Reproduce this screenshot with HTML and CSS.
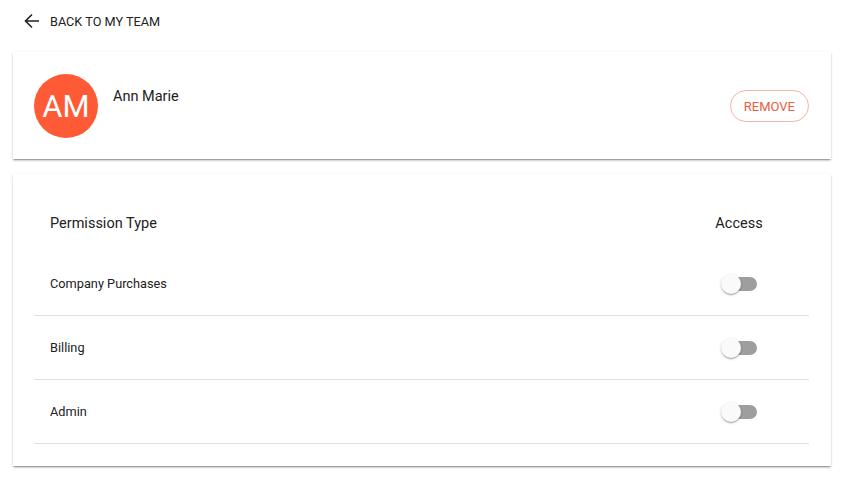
FILE: index.html
```html
<!DOCTYPE html>
<html>
<head>
<meta charset="utf-8">
<link rel="stylesheet" href="styles.css">
</head>
<body>
<div class="page">
  <a class="back">
    <svg class="back-icon" width="16" height="16" viewBox="0 0 16 16"><path d="M15 8H2M8 1.5L1.5 8 8 14.5" fill="none" stroke="#222" stroke-width="1.6"/></svg>
    <span>BACK TO MY TEAM</span>
  </a>
  <div class="card profile">
    <div class="avatar">AM</div>
    <div class="name">Ann Marie</div>
    <button class="remove">REMOVE</button>
  </div>
  <div class="card perms">
    <div class="row head">
      <div class="type">Permission Type</div>
      <div class="access">Access</div>
    </div>
    <div class="row item">
      <div class="type">Company Purchases</div>
      <div class="access"><span class="switch"><span class="track"></span><span class="thumb"></span></span></div>
    </div>
    <div class="row item">
      <div class="type">Billing</div>
      <div class="access"><span class="switch"><span class="track"></span><span class="thumb"></span></span></div>
    </div>
    <div class="row item">
      <div class="type">Admin</div>
      <div class="access"><span class="switch"><span class="track"></span><span class="thumb"></span></span></div>
    </div>
  </div>
</div>
</body>
</html>
```
FILE: styles.css
```css
* { box-sizing: border-box; }
body {
  margin: 0;
  background: #fff;
  font-family: Roboto, "Noto Sans", sans-serif;
  color: #212121;
}
.page {
  padding: 0 15px 13px 13px;
}
.back {
  display: flex;
  align-items: center;
  height: 42px;
  padding-left: 11px;
  gap: 10px;
  font-size: 12.7px;
  color: #222;
}
.back-icon { display: block; }
.card {
  background: #fff;
  box-shadow: 0 2px 2px -1px rgba(0,0,0,.3), 0 1px 1px 0 rgba(0,0,0,.14), 0 1px 3px 0 rgba(0,0,0,.12);
  margin-top: 10px;
}
.profile {
  display: flex;
  align-items: flex-start;
  height: 107px;
  padding: 22px 22px 0 21px;
}
.avatar {
  width: 64px;
  height: 64px;
  border-radius: 50%;
  background: #ff5a36;
  color: #fff;
  font-size: 31px;
  display: flex;
  align-items: center;
  justify-content: center;
}
.name {
  margin-left: 15px;
  margin-top: 14px;
  font-size: 14.5px;
  flex: 1;
}
.remove {
  margin-top: 16px;
  height: 32px;
  padding: 0 13px;
  border-radius: 16px;
  border: 1px solid #f2b6a5;
  background: #fff;
  color: #e8603c;
  font-family: inherit;
  font-size: 13px;
}
.perms {
  margin-top: 15px;
  padding: 21px 22px 22px 21px;
}
.row {
  display: flex;
  align-items: center;
}
.row .type {
  flex: 1;
  padding-left: 16px;
}
.row .access {
  width: 140px;
  display: flex;
  justify-content: center;
}
.head {
  height: 57px;
  font-size: 14.5px;
}
.item {
  height: 64px;
  border-bottom: 1px solid #e0e0e0;
  font-size: 12.75px;
}
.switch {
  position: relative;
  width: 38px;
  height: 20px;
  display: block;
  margin-left: 2px;
}
.track {
  position: absolute;
  left: 2px;
  top: 3px;
  width: 34px;
  height: 14px;
  border-radius: 7px;
  background: #9e9e9e;
}
.thumb {
  position: absolute;
  left: 0;
  top: 0;
  width: 20px;
  height: 20px;
  border-radius: 50%;
  background: #fafafa;
  box-shadow: 0 1px 3px rgba(0,0,0,.2), 0 1px 1px rgba(0,0,0,.14), 0 2px 1px -1px rgba(0,0,0,.12);
}
```
